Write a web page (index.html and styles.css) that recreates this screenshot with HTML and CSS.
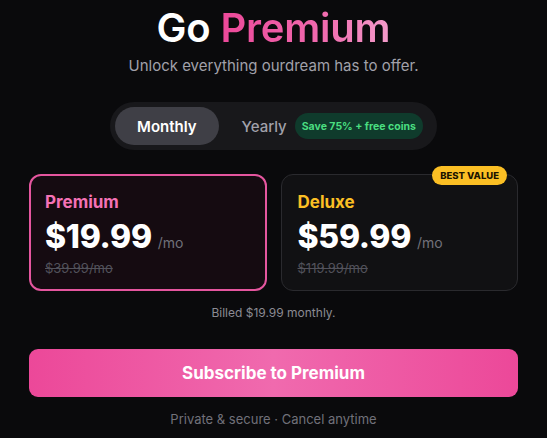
FILE: index.html
```html
<!DOCTYPE html>
<html>
<head>
<meta charset="utf-8">
<link rel="stylesheet" href="styles.css">
</head>
<body>
<main class="page">
  <h1 class="title">Go <span class="accent">Premium</span></h1>
  <p class="subtitle">Unlock everything ourdream has to offer.</p>
  <div class="toggle">
    <button class="seg active">Monthly</button>
    <button class="seg">Yearly <span class="save">Save 75% + free coins</span></button>
  </div>
  <div class="plans">
    <div class="plan selected">
      <div class="plan-name pink">Premium</div>
      <div class="price"><span class="amount">$19.99</span><span class="per">/mo</span></div>
      <div class="old">$39.99/mo</div>
    </div>
    <div class="plan">
      <span class="best">BEST VALUE</span>
      <div class="plan-name gold">Deluxe</div>
      <div class="price"><span class="amount">$59.99</span><span class="per">/mo</span></div>
      <div class="old">$119.99/mo</div>
    </div>
  </div>
  <p class="billed">Billed $19.99 monthly.</p>
  <button class="cta">Subscribe to Premium</button>
  <p class="foot">Private &amp; secure · Cancel anytime</p>
</main>
</body>
</html>
```
FILE: styles.css
```css
* { box-sizing: border-box; }
html, body { margin: 0; padding: 0; }
body {
  background: #0a0a0c;
  font-family: Inter, "Noto Sans", sans-serif;
  color: #fff;
  width: 547px;
  height: 438px;
  overflow: hidden;
}
.page {
  display: flex;
  flex-direction: column;
  align-items: center;
  padding: 4px 29px 0;
}
.title {
  margin: 0;
  font-size: 40px;
  font-weight: 600;
  line-height: 48px;
  letter-spacing: -0.2px;
}
.accent {
  background: linear-gradient(90deg, #ec4899 0%, #f06aae 60%, #f49ccb 100%);
  -webkit-background-clip: text;
  background-clip: text;
  color: transparent;
}
.subtitle {
  margin: 4px 0 0;
  font-size: 15px;
  line-height: 20px;
  color: #a1a1aa;
}
.toggle {
  margin-top: 26px;
  display: flex;
  align-items: center;
  background: #18181b;
  border-radius: 999px;
  padding: 5px;
  gap: 8px;
  padding-right: 14px;
}
.seg {
  font-family: inherit;
  border: 0;
  background: transparent;
  color: #a1a1aa;
  font-size: 15px;
  font-weight: 500;
  border-radius: 999px;
  height: 38px;
  display: flex;
  align-items: center;
  gap: 8px;
  padding: 0 0 0 15px;
}
.seg.active {
  background: #3f3f46;
  color: #fff;
  font-weight: 600;
  padding: 0 22px;
}
.save {
  background: #0f3b2c;
  color: #4ade80;
  font-size: 10.5px;
  font-weight: 700;
  border-radius: 999px;
  height: 26px;
  padding: 0 7px;
  display: flex;
  align-items: center;
}
.plans {
  margin-top: 24px;
  width: 100%;
  display: grid;
  grid-template-columns: 1fr 1fr;
  gap: 14px;
}
.plan {
  position: relative;
  height: 117px;
  border-radius: 12px;
  border: 1px solid #2a2a2e;
  background: #111113;
  padding: 17px 16px 0;
}
.plan.selected {
  border: 2px solid #e5569f;
  background: #150b11;
  padding: 16px 14px 0;
}
.plan-name {
  font-size: 17px;
  font-weight: 700;
  line-height: 20px;
}
.pink { color: #f472b6; }
.gold { color: #fbbf24; }
.price {
  margin-top: 8px;
  display: flex;
  align-items: baseline;
  gap: 6px;
  line-height: 34px;
}
.amount {
  font-size: 32px;
  font-weight: 800;
  letter-spacing: -0.3px;
}
.per {
  font-size: 14px;
  color: #71717a;
}
.old {
  font-size: 13px;
  color: #52525b;
  text-decoration: line-through;
  line-height: 16px;
}
.best {
  position: absolute;
  top: -9px;
  right: 10px;
  background: #fbbf24;
  color: #1c1400;
  font-size: 9.5px;
  font-weight: 800;
  border-radius: 999px;
  height: 19px;
  padding: 0 8px;
  display: flex;
  align-items: center;
}
.billed {
  margin: 14px 0 0;
  font-size: 12px;
  line-height: 16px;
  color: #8b8b93;
}
.cta {
  margin-top: 28px;
  width: 100%;
  height: 48px;
  border: 0;
  border-radius: 9px;
  font-family: inherit;
  font-size: 17px;
  font-weight: 700;
  color: #fff;
  background: linear-gradient(90deg, #ec4899 0%, #f06aae 50%, #ec4899 100%);
}
.foot {
  margin: 14px 0 0;
  font-size: 13px;
  line-height: 16px;
  color: #71717a;
}
```
